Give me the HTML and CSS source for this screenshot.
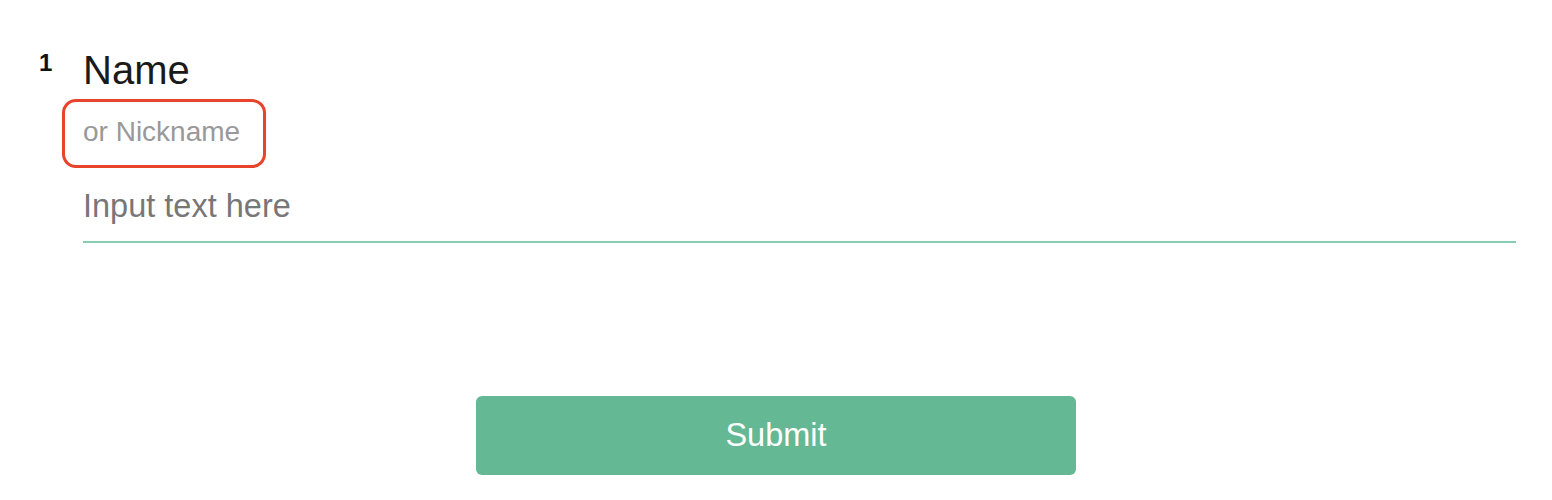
FILE: index.html
```html
<!DOCTYPE html>
<html lang="en">
<head>
<meta charset="utf-8">
<title>Form</title>
<link rel="stylesheet" href="styles.css">
</head>
<body>
<main class="form">
  <section class="question">
    <div class="q-number">1</div>
    <div class="q-body">
      <h2 class="q-title">Name</h2>
      <div class="q-desc">or Nickname</div>
      <div class="q-input">Input text here</div>
    </div>
  </section>
  <div class="actions">
    <button class="submit" type="button">Submit</button>
  </div>
</main>
</body>
</html>
```
FILE: styles.css
```css
html, body {
  margin: 0;
  padding: 0;
  background: #ffffff;
}
body {
  font-family: "Liberation Sans", Arial, Helvetica, sans-serif;
  color: #1a1a1a;
}
.form {
  display: flex;
  flex-direction: column;
  padding: 48px 36px 0 40px;
}
.question {
  display: grid;
  grid-template-columns: 43px 1fr;
}
.q-number {
  font-size: 24px;
  font-weight: 700;
  line-height: 24px;
  margin-top: 3px;
  margin-left: -1px;
  color: #111111;
}
.q-body {
  display: flex;
  flex-direction: column;
  align-items: flex-start;
}
.q-title {
  margin: 0;
  font-size: 40px;
  font-weight: 400;
  line-height: 44px;
  color: #1a1a1a;
}
.q-desc {
  margin: 7px 0 0 -21px;
  width: 204px;
  height: 69px;
  box-sizing: border-box;
  border: 3px solid #e8432b;
  border-radius: 14px;
  padding: 14px 0 0 18px;
  font-size: 28px;
  line-height: 32px;
  color: #999999;
}
.q-input {
  align-self: stretch;
  margin-top: 18px;
  padding-bottom: 15px;
  border-bottom: 2px solid #86cdb1;
  font-size: 32.5px;
  line-height: 40px;
  color: #777777;
}
.actions {
  display: flex;
  justify-content: center;
  margin-top: 153px;
  margin-right: -36px;
  margin-left: -40px;
}
.submit {
  width: 600px;
  height: 79px;
  border: none;
  border-radius: 6px;
  background: #64b893;
  color: #ffffff;
  font-family: "Liberation Sans", Arial, Helvetica, sans-serif;
  font-size: 32.5px;
  cursor: pointer;
}
```
